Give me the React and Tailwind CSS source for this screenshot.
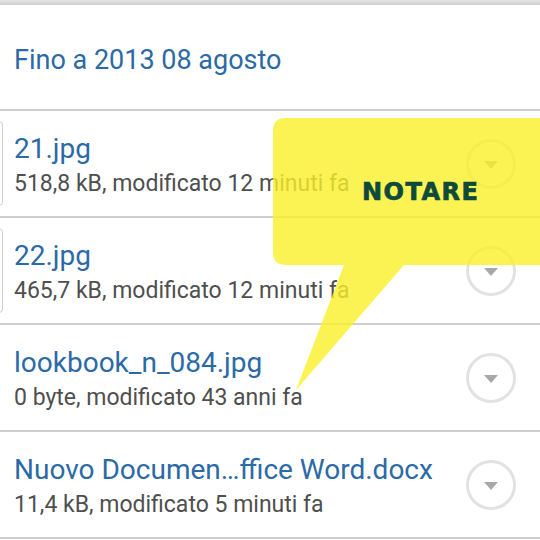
import React from 'react';

const files = [
  { name: '21.jpg', info: '518,8 kB, modificato 12 minuti fa', edge: true },
  { name: '22.jpg', info: '465,7 kB, modificato 12 minuti fa', edge: true },
  { name: 'lookbook_n_084.jpg', info: '0 byte, modificato 43 anni fa' },
  { name: 'Nuovo Documen…ffice Word.docx', info: '11,4 kB, modificato 5 minuti fa' },
];

const MenuButton = () => (
  <div className="w-[50px] h-[50px] rounded-full border-[3px] border-[#e2e2e2] flex items-center justify-center shrink-0">
    <svg width="14" height="8" viewBox="0 0 14 8" className="mt-[2px]">
      <path d="M0 0 L14 0 L7 8 Z" fill="#a8a8a8" />
    </svg>
  </div>
);

const FileRow = ({ file }) => (
  <div className="relative h-[107px] flex items-center justify-between pl-[14px] pr-[24px] border-b-2 border-[#cfcfcf]">
    {file.edge && (
      <div className="absolute left-[-12px] top-[10px] bottom-[10px] w-[15px] rounded-[4px] border border-[#cfcfcf]" />
    )}
    <div className="flex flex-col pt-[4px]">
      <div className="text-[28px] leading-[32px] text-[#2b6aa6] whitespace-nowrap">{file.name}</div>
      <div className="text-[23px] leading-[28px] text-[#4f4f4f] mt-[5px] whitespace-nowrap">{file.info}</div>
    </div>
    <MenuButton />
  </div>
);

const App = () => {
  return (
    <div className="relative w-[540px] h-[540px] overflow-hidden bg-white" style={{ fontFamily: 'Roboto, "Noto Sans", sans-serif' }}>
      {/* Top bar */}
      <div className="h-[5px] bg-gradient-to-b from-[#e4e4e4] to-[#cfcfcf]" />

      {/* Header */}
      <div className="h-[106px] flex items-center px-[14px] border-b-2 border-[#cfcfcf]">
        <span className="text-[27px] text-[#2b6aa6] mt-[6px]">Fino a 2013 08 agosto</span>
      </div>

      {files.map((f) => (
        <FileRow key={f.name} file={f} />
      ))}

      {/* Speech bubble annotation */}
      <svg className="absolute left-0 top-0 pointer-events-none" width="540" height="540" viewBox="0 0 540 540">
        <path
          d="M286 118 L560 118 L560 265 L404 265 L296 390 L344 265 L286 265 Q273 265 273 252 L273 131 Q273 118 286 118 Z"
          fill="rgba(250,240,40,0.8)"
        />
      </svg>
      <div
        className="absolute left-[362px] top-[180px] text-[24px] font-black tracking-[1.5px] text-[#0e4a3b] leading-none [-webkit-text-stroke:0.7px_#0e4a3b]"
        style={{ fontFamily: '"DejaVu Sans", sans-serif' }}
      >
        NOTARE
      </div>
    </div>
  );
};

export default App;
